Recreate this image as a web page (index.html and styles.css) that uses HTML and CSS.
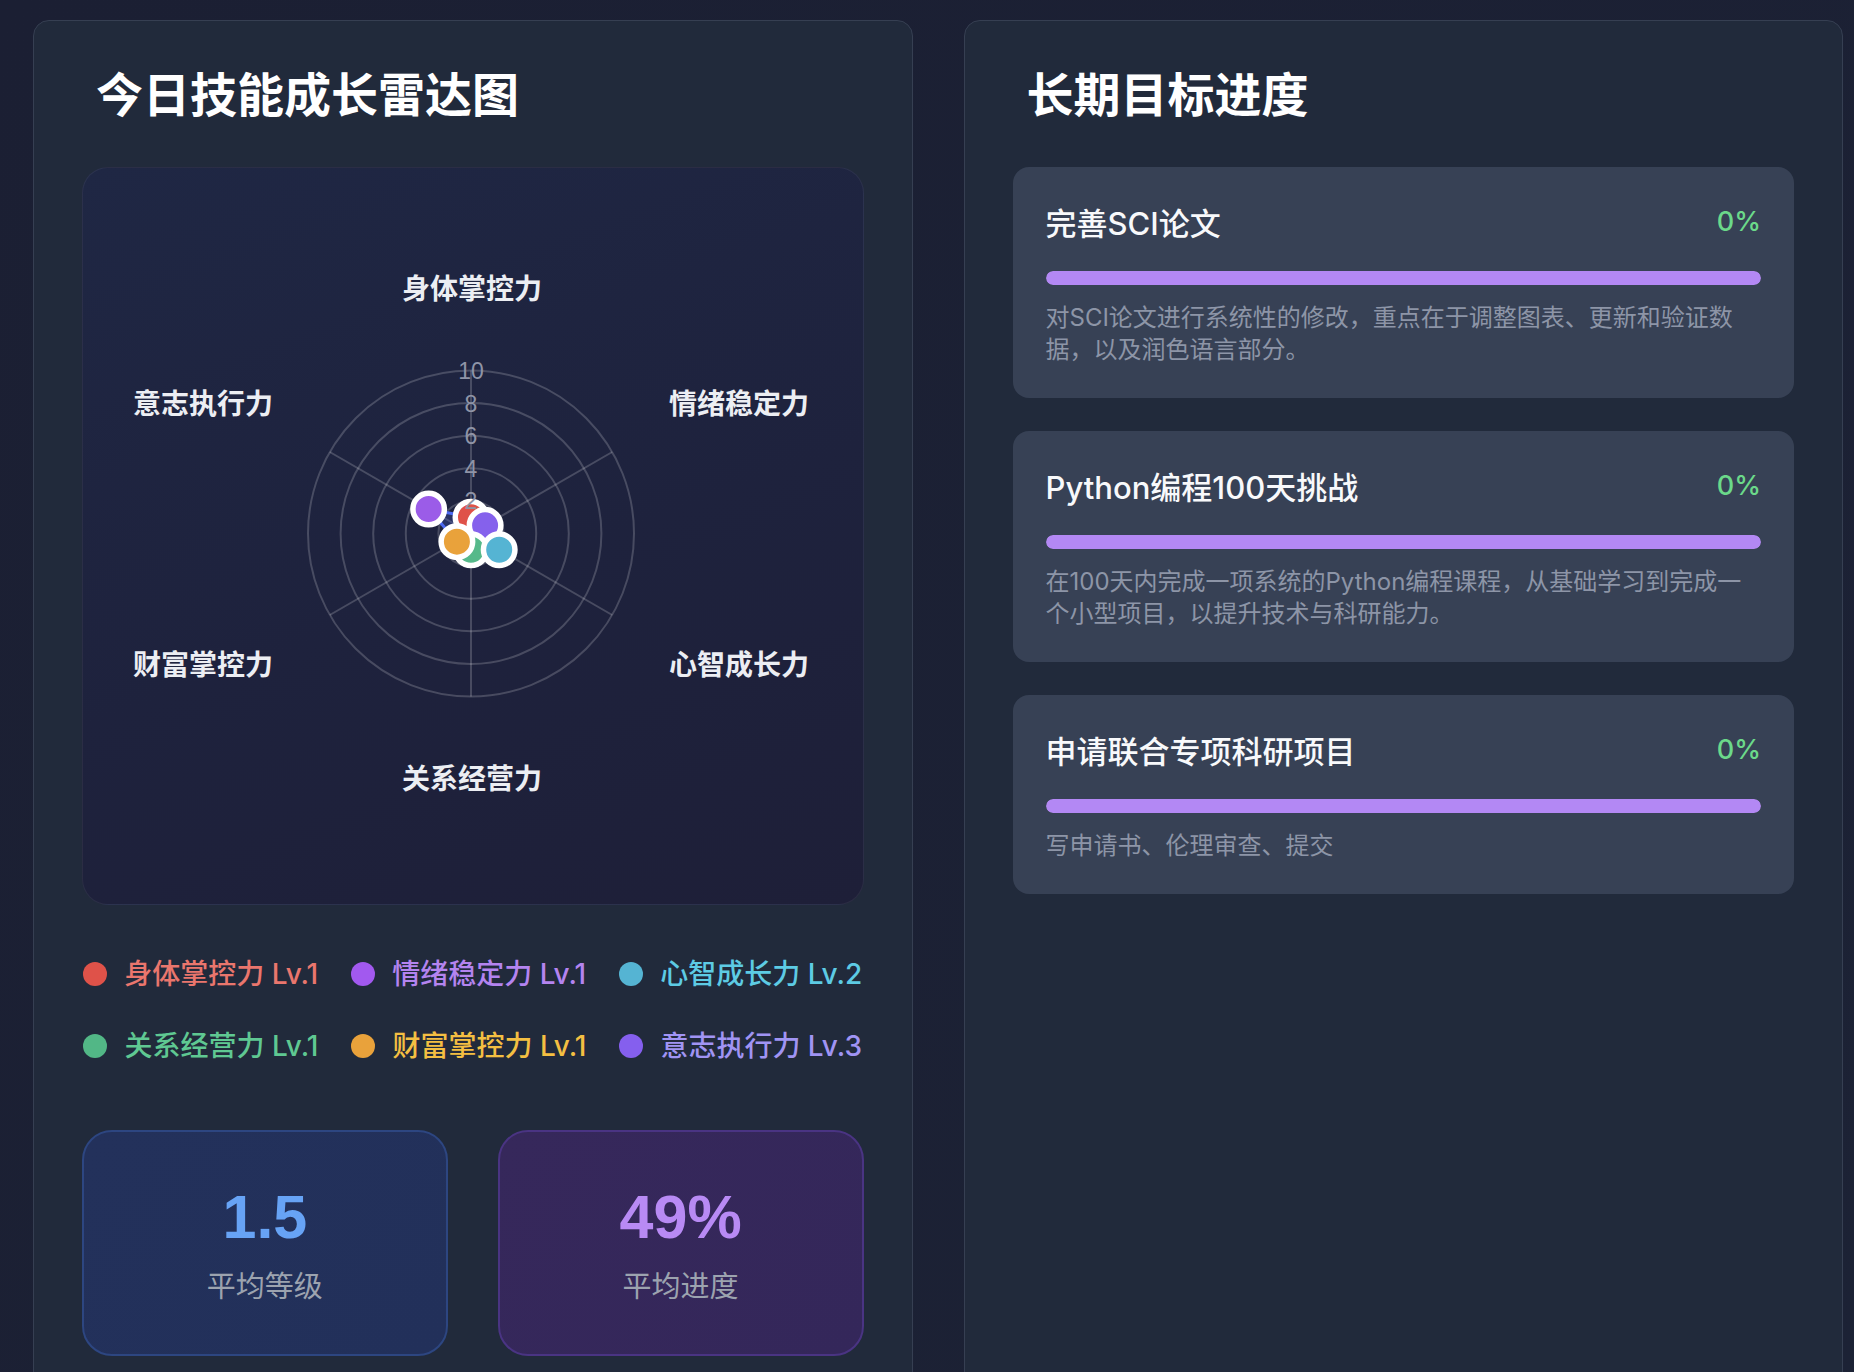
FILE: index.html
```html
<!DOCTYPE html>
<html lang="zh-CN">
<head>
<meta charset="utf-8">
<title>成长面板</title>
<link rel="stylesheet" href="styles.css">
</head>
<body>
<div class="page">
  <section class="card">
    <h2 class="card-title">今日技能成长雷达图</h2>
    <div class="radar-box">
      <svg class="radar" viewBox="0 0 778 736" width="778" height="736">
        <g class="grid">
          <circle cx="388" cy="365.5" r="163"/>
          <circle cx="388" cy="365.5" r="130.4"/>
          <circle cx="388" cy="365.5" r="97.8"/>
          <circle cx="388" cy="365.5" r="65.2"/>
          <circle cx="388" cy="365.5" r="32.6"/>
          <line x1="388" y1="365.5" x2="388" y2="202.5"/>
          <line x1="388" y1="365.5" x2="529.2" y2="284"/>
          <line x1="388" y1="365.5" x2="529.2" y2="447"/>
          <line x1="388" y1="365.5" x2="388" y2="528.5"/>
          <line x1="388" y1="365.5" x2="246.8" y2="447"/>
          <line x1="388" y1="365.5" x2="246.8" y2="284"/>
        </g>
        <polygon class="area" points="388,349.2 402.1,357.35 416.2,381.8 388,381.8 373.9,373.65 345.65,341.05"/>
        <g class="pts">
          <circle cx="388" cy="349.2" r="15.75" fill="#df5249"/>
          <circle cx="402.1" cy="357.35" r="15.75" fill="#8561ec"/>
          <circle cx="388" cy="381.8" r="15.75" fill="#56b98a"/>
          <circle cx="373.9" cy="373.65" r="15.75" fill="#e9a23b"/>
          <circle cx="416.2" cy="381.8" r="15.75" fill="#55b4d3"/>
          <circle cx="345.65" cy="341.05" r="15.75" fill="#9b5ce8"/>
        </g>
        <g class="ticks">
          <text x="388" y="203">10</text>
          <text x="388" y="235.6">8</text>
          <text x="388" y="268.2">6</text>
          <text x="388" y="300.8">4</text>
          <text x="388" y="333.4">2</text>
        </g>
        <g class="axis-labels">
          <text x="389" y="119">身体掌控力</text>
          <text x="656" y="234">情绪稳定力</text>
          <text x="656" y="495">心智成长力</text>
          <text x="389" y="609">关系经营力</text>
          <text x="120" y="495">财富掌控力</text>
          <text x="120" y="234">意志执行力</text>
        </g>
      </svg>
    </div>
    <ul class="legend">
      <li class="legend-item c-body"><span class="dot"></span>身体掌控力 Lv.1</li>
      <li class="legend-item c-emo"><span class="dot"></span>情绪稳定力 Lv.1</li>
      <li class="legend-item c-mind"><span class="dot"></span>心智成长力 Lv.2</li>
      <li class="legend-item c-rel"><span class="dot"></span>关系经营力 Lv.1</li>
      <li class="legend-item c-wealth"><span class="dot"></span>财富掌控力 Lv.1</li>
      <li class="legend-item c-will"><span class="dot"></span>意志执行力 Lv.3</li>
    </ul>
    <div class="stats">
      <div class="stat stat-blue">
        <div class="stat-value">1.5</div>
        <div class="stat-label">平均等级</div>
      </div>
      <div class="stat stat-purple">
        <div class="stat-value">49%</div>
        <div class="stat-label">平均进度</div>
      </div>
    </div>
  </section>

  <section class="card">
    <h2 class="card-title">长期目标进度</h2>
    <div class="goals">
      <div class="goal">
        <div class="goal-head"><span class="goal-name">完善SCI论文</span><span class="goal-pct">0%</span></div>
        <div class="bar"><div class="bar-fill" style="width:100%"></div></div>
        <p class="goal-desc">对SCI论文进行系统性的修改，重点在于调整图表、更新和验证数据，以及润色语言部分。</p>
      </div>
      <div class="goal">
        <div class="goal-head"><span class="goal-name">Python编程100天挑战</span><span class="goal-pct">0%</span></div>
        <div class="bar"><div class="bar-fill" style="width:100%"></div></div>
        <p class="goal-desc">在100天内完成一项系统的Python编程课程，从基础学习到完成一个小型项目，以提升技术与科研能力。</p>
      </div>
      <div class="goal">
        <div class="goal-head"><span class="goal-name">申请联合专项科研项目</span><span class="goal-pct">0%</span></div>
        <div class="bar"><div class="bar-fill" style="width:100%"></div></div>
        <p class="goal-desc">写申请书、伦理审查、提交</p>
      </div>
    </div>
  </section>
</div>
</body>
</html>
```

FILE: styles.css
```css
* { box-sizing: border-box; }

html, body {
  margin: 0;
  padding: 0;
}

body {
  background: linear-gradient(135deg, #1b1f33 0%, #1c2235 100%);
  min-height: 100vh;
  font-family: "Inter", "Noto Sans CJK SC", sans-serif;
  color: #e5e7eb;
}

.page {
  display: grid;
  grid-template-columns: 1fr 1fr;
  column-gap: 51px;
  padding: 20px 11px 0 33px;
}

.card {
  background: #212a3b;
  border: 1.5px solid #363f52;
  border-radius: 16px;
  padding: 46px 48px 48px;
}

.card-title {
  margin: 0 0 44px;
  padding-left: 14px;
  font-size: 47px;
  line-height: 56px;
  font-weight: 700;
  color: #ffffff;
  letter-spacing: 0;
}

/* radar */
.radar-box {
  height: 738px;
  border: 1px solid rgba(255, 255, 255, 0.06);
  border-radius: 26px;
  background: linear-gradient(160deg, #1f2744 0%, #1e223d 55%, #1e1f38 100%);
  overflow: hidden;
}

.radar {
  display: block;
  width: 778px;
  height: 736px;
}

.grid circle,
.grid line {
  fill: none;
  stroke: rgba(255, 255, 255, 0.19);
  stroke-width: 2;
}

.area {
  fill: rgba(80, 110, 240, 0.22);
  stroke: #4c69f0;
  stroke-width: 3;
  stroke-linejoin: round;
}

.pts circle {
  stroke: #ffffff;
  stroke-width: 5.5;
}

.ticks text {
  font-family: "Liberation Sans", Arial, sans-serif;
  font-size: 23px;
  fill: #8f94a7;
  text-anchor: middle;
  dominant-baseline: central;
}

.axis-labels text {
  font-family: "Noto Sans CJK SC", sans-serif;
  font-size: 28px;
  font-weight: 600;
  fill: #eceef3;
  text-anchor: middle;
  dominant-baseline: central;
}

/* legend */
.legend {
  list-style: none;
  margin: 49px 0 0;
  padding: 0;
  display: flex;
  flex-wrap: wrap;
  justify-content: center;
  column-gap: 33px;
  row-gap: 32px;
}

.legend-item {
  display: flex;
  align-items: center;
  gap: 17px;
  font-size: 28px;
  line-height: 40px;
  font-weight: 500;
}

.dot {
  width: 24px;
  height: 24px;
  border-radius: 50%;
  flex: none;
}

.c-body { color: #ea766d; }
.c-body .dot { background: #df5249; }
.c-emo { color: #b484f0; }
.c-emo .dot { background: #a259ef; }
.c-mind { color: #5dcbe4; }
.c-mind .dot { background: #55b4d3; }
.c-rel { color: #5fc892; }
.c-rel .dot { background: #52b786; }
.c-wealth { color: #f4bf42; }
.c-wealth .dot { background: #e9a23b; }
.c-will { color: #a094f4; }
.c-will .dot { background: #855fee; }

/* stats */
.stats {
  margin-top: 64px;
  display: grid;
  grid-template-columns: 1fr 1fr;
  column-gap: 50px;
}

.stat {
  height: 226px;
  border-radius: 30px;
  border: 2px solid;
  display: flex;
  flex-direction: column;
  align-items: center;
  justify-content: center;
}

.stat-blue {
  background: linear-gradient(135deg, #23315b 0%, #22305a 100%);
  border-color: #2d4681;
}

.stat-purple {
  background: linear-gradient(135deg, #36285b 0%, #34275a 100%);
  border-color: #4a3483;
}

.stat-value {
  font-family: "Liberation Sans", Arial, sans-serif;
  font-weight: 700;
  font-size: 61px;
  line-height: 72px;
  margin-top: 2px;
}

.stat-blue .stat-value { color: #67a3f5; }
.stat-purple .stat-value { color: #b88af4; }

.stat-label {
  margin-top: 14px;
  font-size: 29px;
  line-height: 40px;
  color: #9ca3af;
}

/* goals */
.goals {
  display: flex;
  flex-direction: column;
  gap: 33px;
}

.goal {
  background: #374155;
  border-radius: 16px;
  padding: 32px 33px;
}

.goal-head {
  display: flex;
  justify-content: space-between;
  align-items: center;
  height: 45px;
}

.goal-name {
  font-size: 31px;
  font-weight: 500;
  color: #f8f9fb;
}

.goal-pct {
  font-size: 27px;
  font-weight: 500;
  color: #6bd98a;
}

.bar {
  margin-top: 27px;
  height: 14px;
  border-radius: 7px;
  background: rgba(255, 255, 255, 0.1);
  overflow: hidden;
}

.bar-fill {
  height: 100%;
  border-radius: 7px;
  background: #b388f4;
}

.goal-desc {
  margin: 17px 0 0;
  font-size: 24px;
  line-height: 32px;
  color: #8d95a7;
}
```
